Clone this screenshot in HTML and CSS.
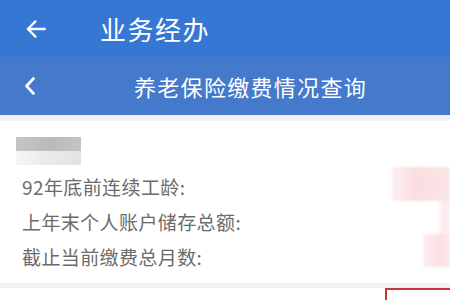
FILE: index.html
```html
<!DOCTYPE html>
<html lang="zh-CN">
<head>
    <meta charset="UTF-8">
    <meta name="viewport" content="width=device-width, initial-scale=1.0">
    <title>业务经办</title>
    <link rel="stylesheet" href="styles.css">
</head>
<body>
    <div class="app-bar">
        <svg class="back-arrow" viewBox="0 0 24 24">
            <path d="M19.5 12H5M11.5 5.5L5 12l6.5 6.5" />
        </svg>
        <span class="app-title">业务经办</span>
    </div>

    <div class="sub-bar">
        <svg class="chevron" viewBox="0 0 12 20">
            <path d="M9.5 2.5L2.5 10l7 7.5" />
        </svg>
        <span class="sub-title">养老保险缴费情况查询</span>
    </div>

    <div class="card">
        <div class="name-mask">
            <div class="mask-top"></div>
            <div class="mask-bottom"></div>
        </div>
        <ul class="info-list">
            <li>92年底前连续工龄:</li>
            <li>上年末个人账户储存总额:</li>
            <li>截止当前缴费总月数:</li>
        </ul>
        <!-- 打码的数值 -->
        <div class="value-mask">
            <div class="pink a"></div>
            <div class="pink b"></div>
            <div class="pink c"></div>
        </div>
    </div>

    <div class="footer">
        <div class="red-box"></div>
    </div>
</body>
</html>
```

FILE: styles.css
```css
* {
    margin: 0;
    padding: 0;
    box-sizing: border-box;
}

body {
    font-family: "Noto Sans CJK SC", "Noto Sans", sans-serif;
    background: #f1f1f1;
    width: 450px;
    height: 300px;
    overflow: hidden;
}

.app-bar {
    height: 57px;
    background: #3677d3;
    display: flex;
    align-items: center;
    padding-left: 22px;
}

.back-arrow {
    width: 28px;
    height: 28px;
    fill: none;
    stroke: #fff;
    stroke-width: 2;
    stroke-linecap: round;
    stroke-linejoin: round;
}

.app-title {
    color: #fff;
    font-size: 26px;
    margin-left: 50px;
    letter-spacing: 1.5px;
    line-height: 1;
}

.sub-bar {
    height: 58px;
    background: #4479cb;
    display: flex;
    align-items: center;
    padding-left: 24px;
}

.chevron {
    width: 12px;
    height: 20px;
    fill: none;
    stroke: #fff;
    stroke-width: 2.6;
    stroke-linecap: round;
    stroke-linejoin: round;
}

.sub-title {
    color: #fff;
    font-size: 22px;
    margin-left: 98px;
    letter-spacing: 1.3px;
    line-height: 1;
}

.card {
    background: #fff;
    margin-top: 6px;
    height: 162px;
    padding: 16px 0 0 16px;
    position: relative;
}

.name-mask {
    width: 65px;
}

.mask-top {
    height: 14px;
    background: linear-gradient(90deg, #c6c6c6 0%, #bababa 50%, #c4c4c4 100%);
}

.mask-bottom {
    height: 14px;
    background: linear-gradient(90deg, #f6f6f6 0%, #ececec 40%, #e2e2e2 100%);
}

.info-list {
    list-style: none;
    padding-left: 6px;
    margin-top: 4px;
}

.info-list li {
    color: #6b6b6b;
    font-size: 19px;
    height: 35px;
    line-height: 35px;
    letter-spacing: 0.4px;
}

.value-mask {
    position: absolute;
    right: 0;
    top: 46px;
    width: 58px;
    height: 102px;
    filter: blur(1.5px);
}

.pink {
    position: absolute;
}

.pink.a {
    left: 0;
    top: 0;
    width: 58px;
    height: 34px;
    background: linear-gradient(90deg, #fdf0f1 0%, #f9dde0 40%, #fbe5e7 100%);
}

.pink.b {
    right: 0;
    top: 34px;
    width: 10px;
    height: 34px;
    background: #fdecee;
}

.pink.c {
    right: 0;
    top: 67px;
    width: 27px;
    height: 33px;
    background: linear-gradient(90deg, #fdeef0 0%, #fadfe2 60%, #fce9eb 100%);
}

.footer {
    height: 12px;
    margin-top: 5px;
    background: #fff;
    overflow: hidden;
    padding-left: 385px;
}

.red-box {
    width: 80px;
    height: 30px;
    border: 2px solid #c8353a;
}
```
